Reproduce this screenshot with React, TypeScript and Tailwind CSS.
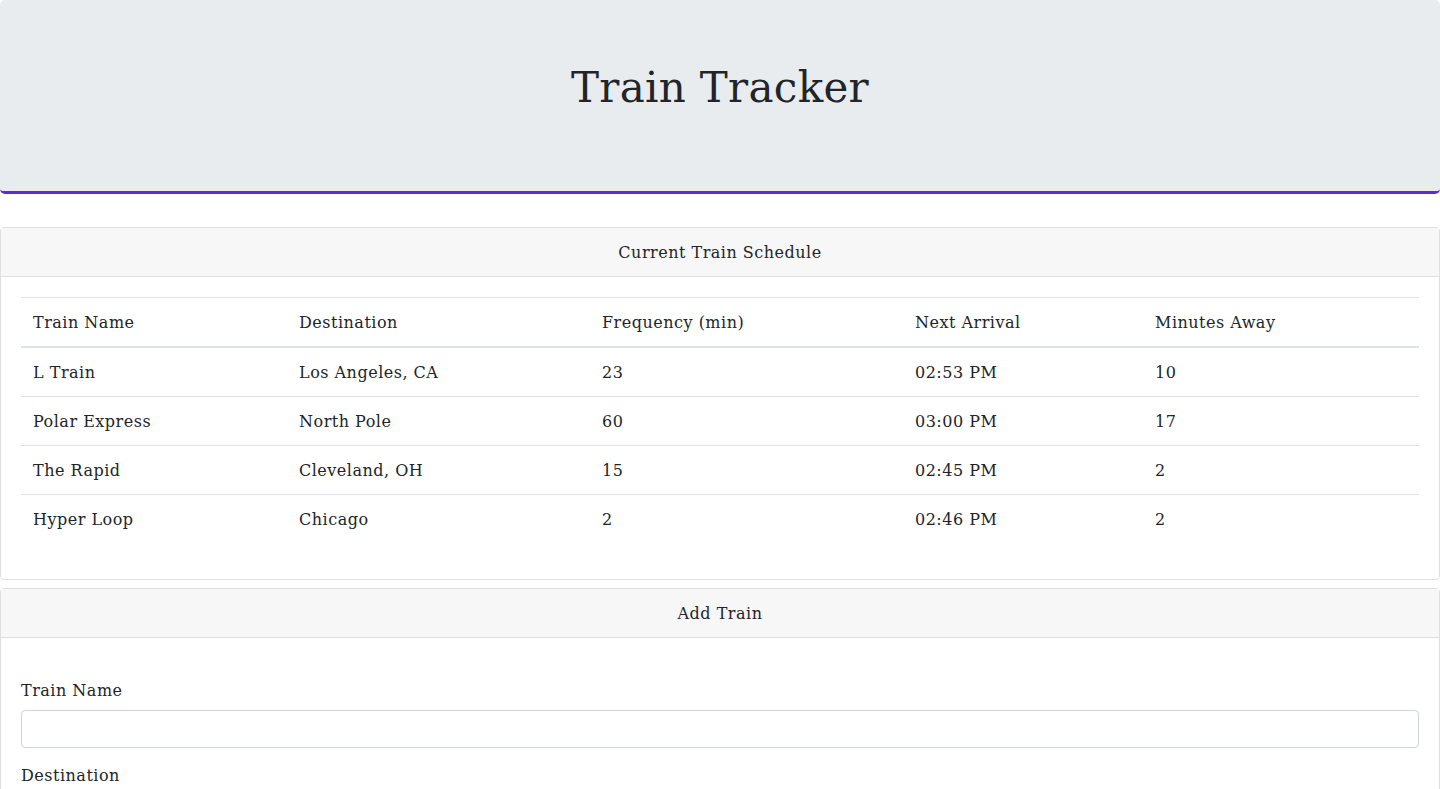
import React from "react";

const rows = [
  ["L Train", "Los Angeles, CA", "23", "02:53 PM", "10"],
  ["Polar Express", "North Pole", "60", "03:00 PM", "17"],
  ["The Rapid", "Cleveland, OH", "15", "02:45 PM", "2"],
  ["Hyper Loop", "Chicago", "2", "02:46 PM", "2"],
];

const widths = ["w-[266px]", "w-[303px]", "w-[313px]", "w-[240px]", "w-[276px]"];

export default function App() {
  return (
    <div className="min-h-[789px] bg-white text-[#212529] text-[16px] leading-[24px] tracking-[0.5px]" style={{ fontFamily: '"DejaVu Serif", serif' }}>
      <div className="h-[194px] bg-[#e9ecef] rounded-[5px] border-b-[3px] border-[#5b2bd6] flex items-center justify-center">
        <h1 className="text-[42px] leading-[48px] font-normal tracking-[0.3px] -mt-[15px]">Train Tracker</h1>
      </div>

      <div className="mt-[33px] border border-[#dfdfdf] rounded-[4px]">
        <div className="h-[49px] bg-[#f7f7f7] border-b border-[#dfdfdf] flex items-center justify-center pt-[1px]">
          Current Train Schedule
        </div>
        <div className="p-[20px]">
          <table className="w-full border-collapse mb-[16px]">
            <thead>
              <tr>
                {["Train Name", "Destination", "Frequency (min)", "Next Arrival", "Minutes Away"].map((h, i) => (
                  <th key={h} className={`${widths[i]} text-left font-normal px-[12px] pt-[13px] pb-[11px] border-t border-b-2 border-[#dee2e6]`}>
                    {h}
                  </th>
                ))}
              </tr>
            </thead>
            <tbody>
              {rows.map((r, ri) => (
                <tr key={ri}>
                  {r.map((c, ci) => (
                    <td key={ci} className={`px-[12px] pt-[13px] pb-[11px] ${ri > 0 ? "border-t" : ""} border-[#dee2e6]`}>
                      {c}
                    </td>
                  ))}
                </tr>
              ))}
            </tbody>
          </table>
        </div>
      </div>

      <div className="mt-[8px] border border-[#dfdfdf] rounded-[4px]">
        <div className="h-[49px] bg-[#f7f7f7] border-b border-[#dfdfdf] flex items-center justify-center pt-[1px]">
          Add Train
        </div>
        <div className="px-[20px] pt-[41px] pb-[20px]">
          <div className="mb-[16px]">
            <label className="block mb-[7px]">Train Name</label>
            <input className="block w-full h-[38px] border border-[#ced4da] rounded-[4px] px-[12px]" />
          </div>
          <div className="mb-[16px]">
            <label className="block mb-[7px]">Destination</label>
            <input className="block w-full h-[38px] border border-[#ced4da] rounded-[4px] px-[12px]" />
          </div>
        </div>
      </div>
    </div>
  );
}
